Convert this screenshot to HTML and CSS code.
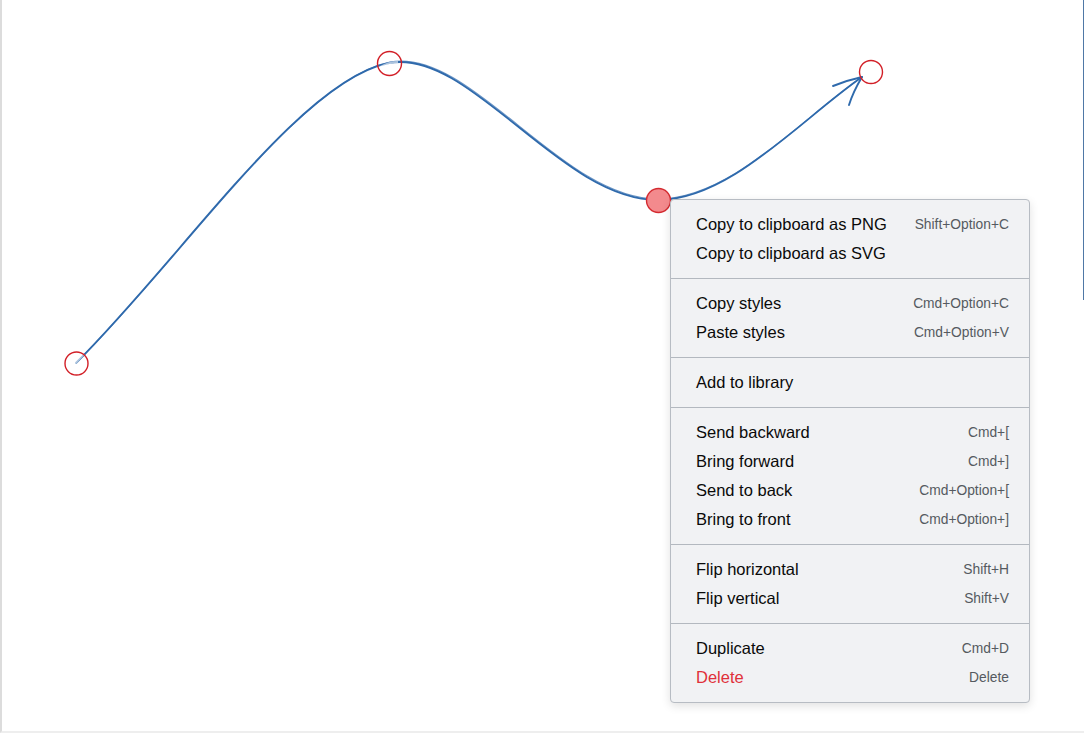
FILE: index.html
```html
<!DOCTYPE html>
<html>
<head>
<meta charset="utf-8">
<link rel="stylesheet" href="styles.css">
</head>
<body>
<div class="stage">
  <svg class="drawing" width="1084" height="733" viewBox="0 0 1084 733">
    <g fill="none" stroke="#2f6aac" stroke-linecap="round" stroke-linejoin="round">
      <path d="M76,363 C180,260 300,80 389,63 C470,48 560,200 658,200 C730,200 800,120 862,77" stroke-width="1.8"/>
      <path d="M77.5,361.5 C181,259.5 301,80 390,62 C471,47.5 561,199 658,199 C731,199 801,119 862,77" stroke-width="1.2" opacity="0.7"/>
      <path d="M833,86 Q848,80 862,77 Q853,92 849,105" stroke-width="1.9"/>
    </g>
    <g stroke="#ffffff" stroke-width="2" opacity="0.6" fill="none">
      <path d="M72,367 L84,354"/>
      <path d="M380,67 Q389,62 398,62"/>
    </g>
    <g fill="none" stroke="#d21f27" stroke-width="1.4">
      <circle cx="76.5" cy="363.5" r="11.5"/>
      <circle cx="389.5" cy="63.5" r="12"/>
      <circle cx="871" cy="72" r="11.5"/>
    </g>
    <circle cx="658.5" cy="200.5" r="12" fill="#f38a8d" stroke="#d42a30" stroke-width="1.4"/>
  </svg>

  <div class="menu">
    <div class="group">
      <div class="item"><span class="label">Copy to clipboard as PNG</span><span class="key">Shift+Option+C</span></div>
      <div class="item"><span class="label">Copy to clipboard as SVG</span></div>
    </div>
    <div class="group">
      <div class="item"><span class="label">Copy styles</span><span class="key">Cmd+Option+C</span></div>
      <div class="item"><span class="label">Paste styles</span><span class="key">Cmd+Option+V</span></div>
    </div>
    <div class="group">
      <div class="item"><span class="label">Add to library</span></div>
    </div>
    <div class="group">
      <div class="item"><span class="label">Send backward</span><span class="key">Cmd+[</span></div>
      <div class="item"><span class="label">Bring forward</span><span class="key">Cmd+]</span></div>
      <div class="item"><span class="label">Send to back</span><span class="key">Cmd+Option+[</span></div>
      <div class="item"><span class="label">Bring to front</span><span class="key">Cmd+Option+]</span></div>
    </div>
    <div class="group">
      <div class="item"><span class="label">Flip horizontal</span><span class="key">Shift+H</span></div>
      <div class="item"><span class="label">Flip vertical</span><span class="key">Shift+V</span></div>
    </div>
    <div class="group">
      <div class="item"><span class="label">Duplicate</span><span class="key">Cmd+D</span></div>
      <div class="item danger"><span class="label">Delete</span><span class="key">Delete</span></div>
    </div>
  </div>
  <div class="edge-right"></div>
</div>
</body>
</html>
```

FILE: styles.css
```css
html, body {
  margin: 0;
  padding: 0;
  background: #ffffff;
}

.stage {
  position: relative;
  width: 1084px;
  height: 733px;
  box-sizing: border-box;
  border-left: 2px solid #dcdcdc;
  border-bottom: 2px solid #eeeeee;
  overflow: hidden;
  font-family: "Liberation Sans", Arial, Helvetica, sans-serif;
}

.drawing {
  position: absolute;
  left: -2px;
  top: 0;
}

.edge-right {
  position: absolute;
  right: 0;
  top: 0;
  width: 1px;
  height: 300px;
  background: #4f78a6;
}

.menu {
  position: absolute;
  left: 668px;
  top: 199px;
  width: 360px;
  box-sizing: border-box;
  background: #f1f2f4;
  border: 1px solid #b7bcc3;
  border-radius: 4px;
  box-shadow: 0 3px 10px rgba(0, 0, 0, 0.12);
}

.group {
  padding: 10px 0;
  border-top: 1px solid #b3b8bf;
}

.group:first-child {
  border-top: none;
}

.item {
  height: 29px;
  display: flex;
  align-items: center;
  justify-content: space-between;
  padding: 0 20px 0 25px;
}

.label {
  font-size: 16.5px;
  color: #0a0a0a;
}

.key {
  font-size: 13.8px;
  color: #555a60;
}

.danger .label {
  color: #e0303a;
}
```
